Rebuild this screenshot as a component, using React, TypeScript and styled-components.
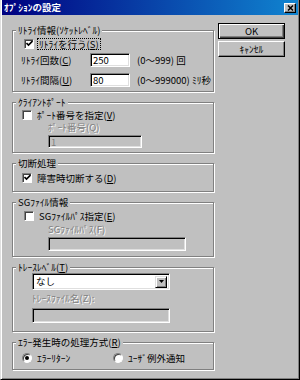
import styled, { createGlobalStyle } from 'styled-components';

const Global = createGlobalStyle`
  html, body { margin: 0; padding: 0; background: #c0c0c0; }
  body {
    font-family: "Noto Sans CJK JP", "Noto Sans", sans-serif;
    font-size: 9.5px;
    color: #000;
  }
`;

const Window = styled.div`
  box-sizing: border-box;
  width: 300px;
  height: 380px;
  background: #c0c0c0;
  border-left: 1px solid #dfdfdf;
  border-right: 1px solid #000;
  border-bottom: 1px solid #000;
  box-shadow: inset 1px 0 0 #fff, inset -1px -1px 0 #808080;
  display: flex;
  flex-direction: column;
  overflow: hidden;
`;

const TitleBar = styled.div`
  height: 15px;
  margin: 0 1px 0 1px;
  padding: 0 2px 0 2px;
  display: flex;
  align-items: center;
  justify-content: space-between;
  background: linear-gradient(to right, #000080, #1084d0);
`;

const TitleText = styled.span`
  color: #fff;
  font-weight: 700;
  font-size: 9.5px;
  line-height: 15px;
`;

const CloseBtn = styled.div`
  box-sizing: border-box;
  width: 12px;
  height: 10px;
  background: #c0c0c0;
  border: 1px solid;
  border-color: #fff #000 #000 #fff;
  box-shadow: inset -1px -1px 0 #808080;
  display: flex;
  align-items: center;
  justify-content: center;
`;

const Body = styled.div`
  display: flex;
  padding: 8px 0 0 11px;
`;

const LeftCol = styled.div`
  width: 202px;
  padding-top: 7px;
  display: flex;
  flex-direction: column;
  gap: 10px;
`;

const RightCol = styled.div`
  margin-left: 4px;
  display: flex;
  flex-direction: column;
  gap: 2px;
`;

const Button = styled.div<{ $default?: boolean }>`
  box-sizing: border-box;
  width: 67px;
  height: 16px;
  display: flex;
  align-items: center;
  justify-content: center;
  background: #c0c0c0;
  border: 1px solid;
  border-color: ${(p) => (p.$default ? '#000' : '#fff #000 #000 #fff')};
  box-shadow: ${(p) =>
    p.$default
      ? 'inset 1px 1px 0 #fff, inset -1px -1px 0 #404040, inset -2px -2px 0 #808080'
      : 'inset -1px -1px 0 #808080'};
  line-height: 11px;
`;

const Group = styled.div<{ $h: number }>`
  box-sizing: border-box;
  height: ${(p) => p.$h}px;
  border: 1px solid #808080;
  box-shadow: inset 1px 1px 0 #fff, 1px 1px 0 #fff;
  display: flex;
  flex-direction: column;
`;

const Legend = styled.span`
  align-self: flex-start;
  height: 11px;
  line-height: 11px;
  margin: -6px 0 -5px 3px;
  padding: 0 2px;
  background: #c0c0c0;
  white-space: nowrap;
`;

const Row = styled.div<{ $mt: number; $pl: number; $h?: number }>`
  display: flex;
  align-items: center;
  height: ${(p) => p.$h ?? 11}px;
  margin-top: ${(p) => p.$mt}px;
  padding-left: ${(p) => p.$pl}px;
  line-height: 11px;
  white-space: nowrap;
`;

const Box = styled.span`
  box-sizing: border-box;
  width: 10px;
  height: 10px;
  background: #fff;
  border: 1px solid;
  border-color: #808080 #fff #fff #808080;
  box-shadow: inset 1px 1px 0 #404040;
  display: flex;
  align-items: center;
  justify-content: center;
  flex-shrink: 0;
`;

const Radio = styled(Box)`
  border-radius: 50%;
`;

const Dot = styled.span`
  width: 4px;
  height: 4px;
  border-radius: 50%;
  background: #000;
`;

const Label = styled.span<{ $focus?: boolean; $w?: number }>`
  margin-left: 4px;
  padding: 0 1px;
  line-height: 10px;
  outline: ${(p) => (p.$focus ? '1px dotted #000' : 'none')};
  width: ${(p) => (p.$w ? `${p.$w}px` : 'auto')};
`;

const FieldLabel = styled.span`
  width: 69px;
`;

const Disabled = styled.span`
  color: #808080;
  text-shadow: 1px 1px 0 #fff;
`;

const Suffix = styled.span`
  margin-left: 7px;
`;

const Input = styled.input<{ $w: number; $off?: boolean }>`
  box-sizing: border-box;
  width: ${(p) => p.$w}px;
  height: 100%;
  margin: 0;
  padding: 0 2px;
  font: inherit;
  font-size: 9.5px;
  color: ${(p) => (p.$off ? '#808080' : '#000')};
  background: ${(p) => (p.$off ? '#c0c0c0' : '#fff')};
  border: 1px solid;
  border-color: #808080 #fff #fff #808080;
  box-shadow: inset 1px 1px 0 #000, inset -1px -1px 0 #dfdfdf;
  outline: none;
`;

const Select = styled.div`
  box-sizing: border-box;
  width: 138px;
  height: 100%;
  padding: 0 2px 0 3px;
  display: flex;
  align-items: center;
  justify-content: space-between;
  background: #fff;
  border: 1px solid;
  border-color: #808080 #fff #fff #808080;
  box-shadow: inset 1px 1px 0 #000, inset -1px -1px 0 #dfdfdf;
`;

const Arrow = styled.span`
  box-sizing: border-box;
  width: 12px;
  height: 12px;
  background: #c0c0c0;
  border: 1px solid;
  border-color: #dfdfdf #000 #000 #dfdfdf;
  box-shadow: inset 1px 1px 0 #fff, inset -1px -1px 0 #808080;
  display: flex;
  align-items: center;
  justify-content: center;
`;

function Check({ on }: { on?: boolean }) {
  return (
    <Box>
      {on && (
        <svg width="7" height="7" viewBox="0 0 7 7">
          <path d="M0.5 3 L2.5 5 L6.5 1" stroke="#000" strokeWidth="1.6" fill="none" />
        </svg>
      )}
    </Box>
  );
}

export default function App() {
  return (
    <>
      <Global />
      <Window>
        <TitleBar>
          <TitleText>ｵﾌﾟｼｮﾝの設定</TitleText>
          <CloseBtn>
            <svg width="7" height="6" viewBox="0 0 7 6">
              <path d="M1 0.5 L6 5.5 M6 0.5 L1 5.5" stroke="#000" strokeWidth="1.5" />
            </svg>
          </CloseBtn>
        </TitleBar>
        <Body>
          <LeftCol>
            <Group $h={62}>
              <Legend>ﾘﾄﾗｲ情報(ｿｹｯﾄﾚﾍﾞﾙ)</Legend>
              <Row $mt={7} $pl={11}>
                <Check on />
                <Label $focus>
                  ﾘﾄﾗｲを行う(<u>S</u>)
                </Label>
              </Row>
              <Row $mt={4} $pl={8} $h={14}>
                <FieldLabel>
                  ﾘﾄﾗｲ回数(<u>C</u>)
                </FieldLabel>
                <Input $w={40} readOnly defaultValue="250" />
                <Suffix>(0～999) 回</Suffix>
              </Row>
              <Row $mt={6} $pl={8} $h={14}>
                <FieldLabel>
                  ﾘﾄﾗｲ間隔(<u>U</u>)
                </FieldLabel>
                <Input $w={40} readOnly defaultValue="80" />
                <Suffix>(0～999000) ﾐﾘ秒</Suffix>
              </Row>
            </Group>

            <Group $h={51}>
              <Legend>ｸﾗｲｱﾝﾄﾎﾟｰﾄ</Legend>
              <Row $mt={6} $pl={9}>
                <Check />
                <Label>
                  ﾎﾟｰﾄ番号を指定(<u>V</u>)
                </Label>
              </Row>
              <Row $mt={2} $pl={35}>
                <Disabled>ﾎﾟｰﾄ番号(Q)</Disabled>
              </Row>
              <Row $mt={2} $pl={35} $h={13}>
                <Input $w={94} $off readOnly defaultValue="1" />
              </Row>
            </Group>

            <Group $h={29}>
              <Legend>切断処理</Legend>
              <Row $mt={8} $pl={9}>
                <Check on />
                <Label>
                  障害時切断する(<u>D</u>)
                </Label>
              </Row>
            </Group>

            <Group $h={55}>
              <Legend>SGﾌｧｲﾙ情報</Legend>
              <Row $mt={7} $pl={11}>
                <Check />
                <Label>
                  SGﾌｧｲﾙﾊﾟｽ指定(<u>E</u>)
                </Label>
              </Row>
              <Row $mt={3} $pl={35}>
                <Disabled>SGﾌｧｲﾙﾊﾟｽ(F)</Disabled>
              </Row>
              <Row $mt={2} $pl={35} $h={14}>
                <Input $w={138} $off readOnly defaultValue="" />
              </Row>
            </Group>

            <Group $h={65}>
              <Legend>
                ﾄﾚｰｽﾚﾍﾞﾙ(<u>T</u>)
              </Legend>
              <Row $mt={5} $pl={19} $h={17}>
                <Select>
                  <span>なし</span>
                  <Arrow>
                    <svg width="5" height="3" viewBox="0 0 5 3">
                      <path d="M0 0 H5 L2.5 3 Z" fill="#000" />
                    </svg>
                  </Arrow>
                </Select>
              </Row>
              <Row $mt={3} $pl={19}>
                <Disabled>ﾄﾚｰｽﾌｧｲﾙ名(Z):</Disabled>
              </Row>
              <Row $mt={4} $pl={19} $h={15}>
                <Input $w={138} $off readOnly defaultValue="" />
              </Row>
            </Group>

            <Group $h={28}>
              <Legend>
                ｴﾗｰ発生時の処理方式(<u>R</u>)
              </Legend>
              <Row $mt={9} $pl={9}>
                <Radio>
                  <Dot />
                </Radio>
                <Label $w={75}>ｴﾗｰﾘﾀｰﾝ</Label>
                <Radio />
                <Label>ﾕｰｻﾞ例外通知</Label>
              </Row>
            </Group>
          </LeftCol>

          <RightCol>
            <Button $default>OK</Button>
            <Button>ｷｬﾝｾﾙ</Button>
          </RightCol>
        </Body>
      </Window>
    </>
  );
}
